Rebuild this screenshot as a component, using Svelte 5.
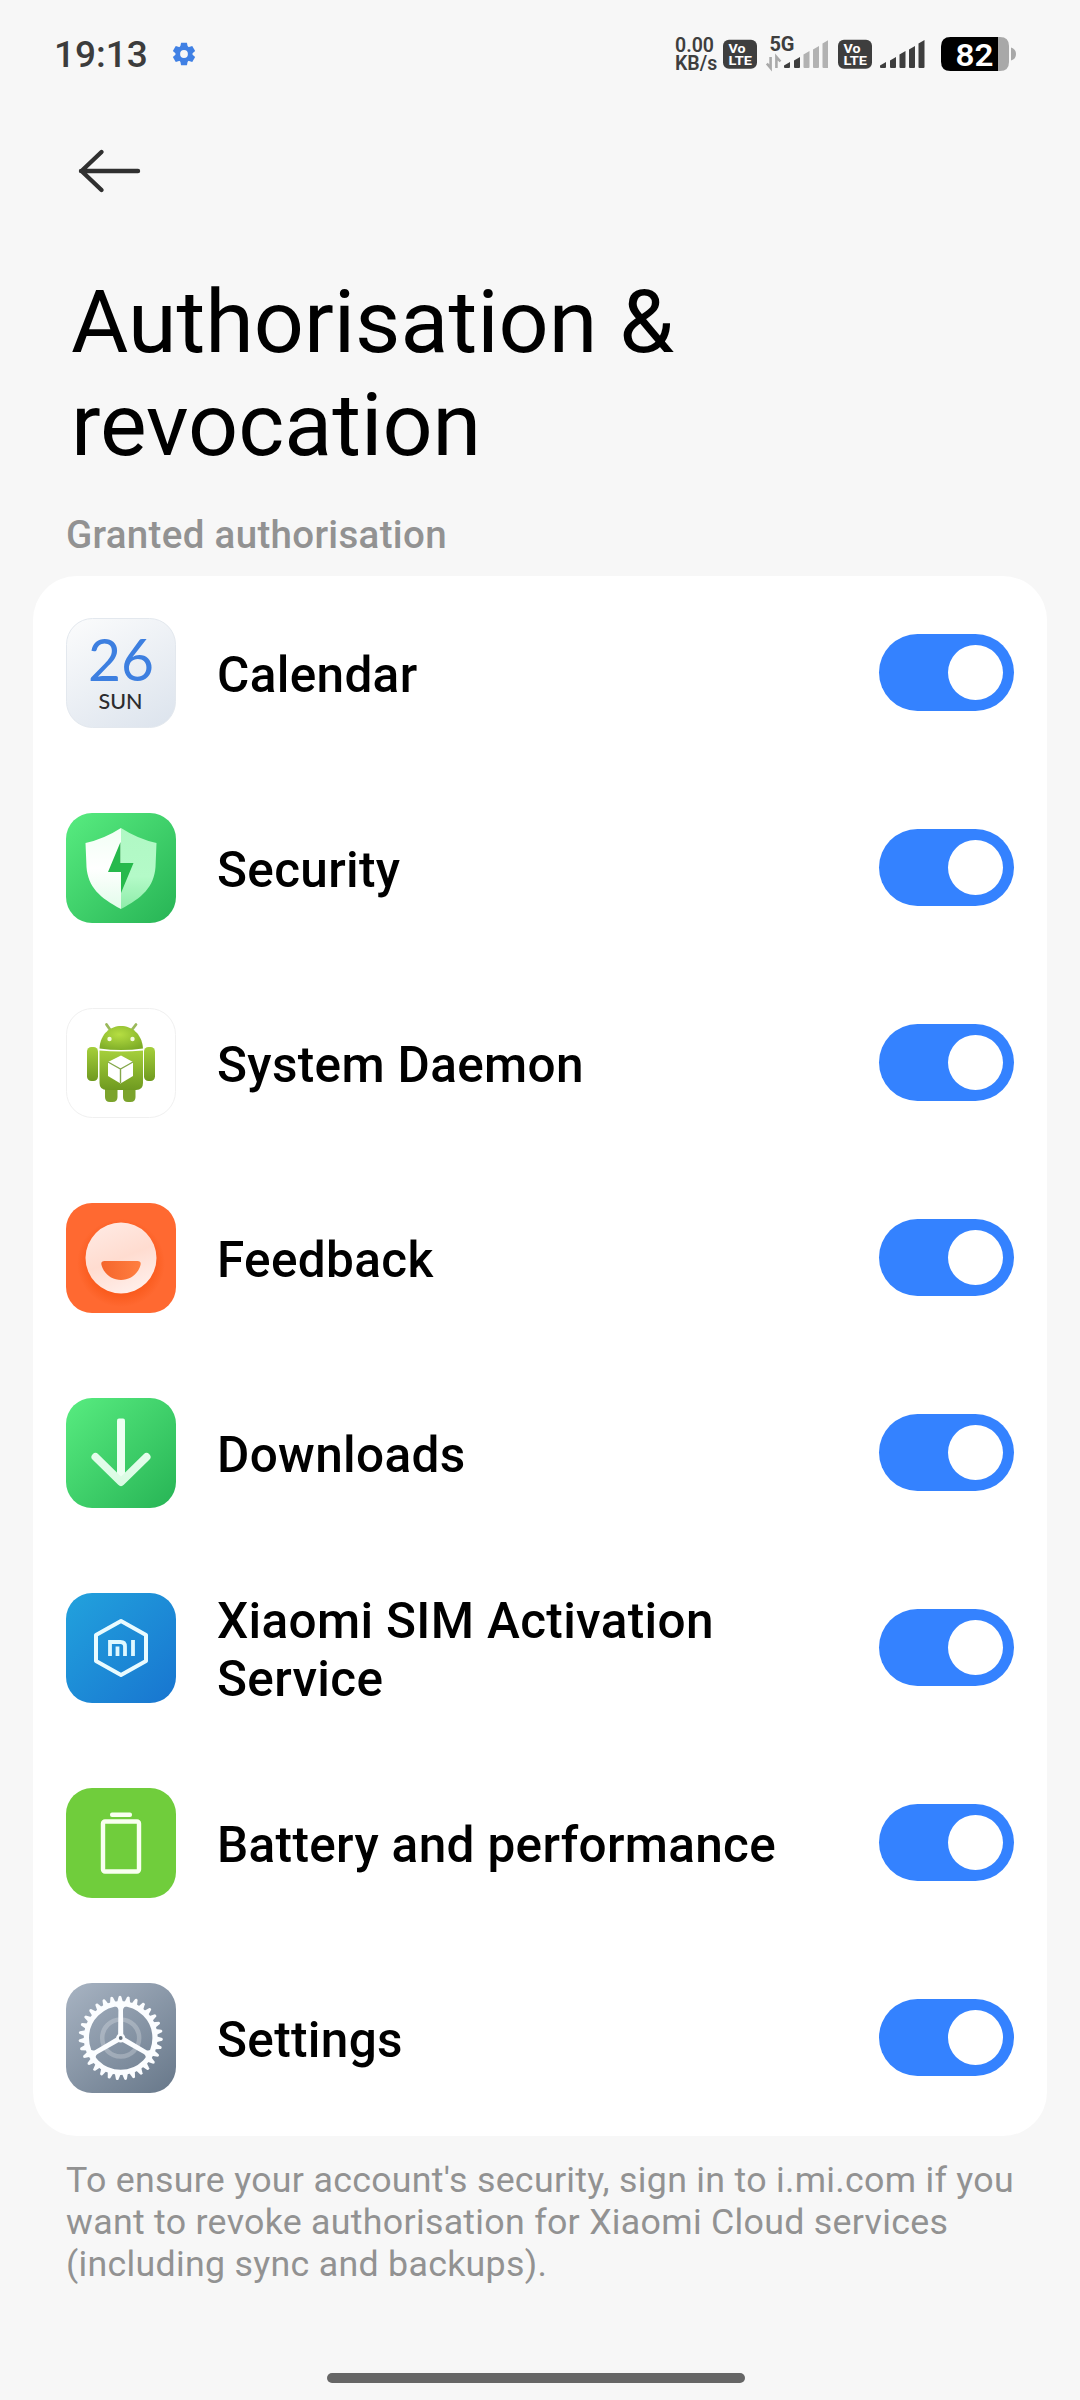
<script lang="ts">
	type App = { id: string; name: string; on: boolean };

	let apps: App[] = $state([
		{ id: 'calendar', name: 'Calendar', on: true },
		{ id: 'security', name: 'Security', on: true },
		{ id: 'daemon', name: 'System Daemon', on: true },
		{ id: 'feedback', name: 'Feedback', on: true },
		{ id: 'downloads', name: 'Downloads', on: true },
		{ id: 'sim', name: 'Xiaomi SIM Activation Service', on: true },
		{ id: 'battery', name: 'Battery and performance', on: true },
		{ id: 'settings', name: 'Settings', on: true }
	]);

	const TEETH = 31;
	const teeth = Array.from({ length: TEETH }, (_, i) => (i * 360) / TEETH - 1);
	const smallTeeth = [0, 60, 120, 180, 240, 300];

	// left edge, top edge of each signal bar
	const bars = [
		[0, 24],
		[10, 19],
		[19.5, 13],
		[29, 8],
		[38.5, 2]
	];
</script>

{#snippet volte()}
	<svg class="volte" width="34" height="30" viewBox="0 0 34 30">
		<rect y="0.8" width="34" height="29" rx="6" fill="#3e3e3e" />
		<text x="5.5" y="14" font-size="13" textLength="17" lengthAdjust="spacingAndGlyphs">Vo</text>
		<text x="5.5" y="26.2" font-size="13" textLength="23.5" lengthAdjust="spacingAndGlyphs">LTE</text>
	</svg>
{/snippet}

{#snippet signal(level: number)}
	{#each bars as [x, y], i}
		<path
			d="M{x} {y + 3.5} L{x + 6} {y} V29 Q{x + 6} 30 {x + 5} 30 H{x + 1} Q{x} 30 {x} 29 Z"
			fill={i < level ? '#3e3e3e' : '#b2b2b2'}
		/>
	{/each}
{/snippet}

<div class="screen">
	<header class="status">
		<span class="time">19:13</span>
		<svg class="notif" width="24" height="24" viewBox="-12 -12 24 24">
			{#each smallTeeth as a}
				<path d="M-3.8 -7 L-2.9 -11.2 H2.9 L3.8 -7 Z" fill="#4080e4" transform="rotate({a})" />
			{/each}
			<circle r="6.2" fill="none" stroke="#4080e4" stroke-width="4.6" />
		</svg>

		<div class="tray">
			<div class="speed">
				<span>0.00</span>
				<span>KB/s</span>
			</div>
			{@render volte()}
			<svg class="cell" width="62" height="44" viewBox="0 -4 62 44">
				<text x="3.5" y="15" font-size="20" font-weight="700" fill="#3e3e3e" textLength="25">5G</text>
				<path d="M4.6 21 V32 L0.8 27.5 M10.4 32 V21 L14.4 25.5" fill="none" stroke="#a9a9a9" stroke-width="2.6" />
				<g transform="translate(18 2)">{@render signal(2)}</g>
			</svg>
			{@render volte()}
			<svg class="cell2" width="45" height="36" viewBox="0 0 45 36">
				<g transform="translate(0 2)">{@render signal(5)}</g>
			</svg>
			<svg class="power" width="76" height="42" viewBox="0 -4 76 42">
				<path d="M57 0 H59 Q68 0 68 9 V25 Q68 34 59 34 H57 Z" fill="#a8a8a8" />
				<path d="M9.5 0 H57 V34 H9.5 Q0 34 0 24.5 V9.5 Q0 0 9.5 0 Z" fill="#000" />
				<path d="M70 10.5 Q75 12 75 17 Q75 22 70 23.5 Z" fill="#a8a8a8" />
				<text x="14.5" y="28.5" font-size="32" font-weight="600" fill="#fff" textLength="38" lengthAdjust="spacingAndGlyphs">82</text>
			</svg>
		</div>
	</header>

	<button class="back" aria-label="Back">
		<svg width="64" height="46" viewBox="0 0 64 46">
			<path
				d="M3 23 H60 M23.500 4 L3.500 23 L23.500 42"
				fill="none"
				stroke="#303030"
				stroke-width="4.4"
				stroke-linecap="round"
				stroke-linejoin="round"
			/>
		</svg>
	</button>

	<h1>Authorisation &amp; revocation</h1>
	<h2>Granted authorisation</h2>

	<ul class="card">
		{#each apps as app (app.id)}
			<li class="row">
				<svg class="icon" width="110" height="110" viewBox="0 0 110 110">
					{#if app.id === 'calendar'}
						<defs>
							<linearGradient id="cal" x1="0.2" y1="0" x2="0.8" y2="1">
								<stop offset="0" stop-color="#f9fafb" />
								<stop offset="1" stop-color="#dee5ee" />
							</linearGradient>
						</defs>
						<rect x="0.5" y="0.5" width="109" height="109" rx="26" fill="url(#cal)" stroke="#e3e8ee" />
						<text class="day" x="22" y="62.500" textLength="66" lengthAdjust="spacingAndGlyphs">26</text>
						<text class="weekday" x="32.500" y="91" textLength="44" lengthAdjust="spacingAndGlyphs">SUN</text>
					{:else if app.id === 'security'}
						<defs>
							<linearGradient id="sec" x1="0" y1="0" x2="1" y2="1">
								<stop offset="0" stop-color="#58ec80" />
								<stop offset="1" stop-color="#27b455" />
							</linearGradient>
							<linearGradient id="secR" x1="0" y1="0" x2="0" y2="1">
								<stop offset="0" stop-color="#b0f8c4" />
								<stop offset="0.6" stop-color="#b4fac8" />
								<stop offset="1" stop-color="#8eeca9" />
							</linearGradient>
							<linearGradient id="secL" x1="0" y1="0" x2="0" y2="1">
								<stop offset="0" stop-color="#f1fff5" />
								<stop offset="0.5" stop-color="#fff" />
								<stop offset="1" stop-color="#e2fcea" />
							</linearGradient>
						</defs>
						<rect width="110" height="110" rx="26" fill="url(#sec)" />
						<path d="M55 15 Q38 26 19.500 30 L20.500 54 C22 74 34 85 55 96 Z" fill="url(#secL)" />
						<path d="M55 15 Q72 26 90.500 30 L89.500 54 C88 74 76 85 55 96 Z" fill="url(#secR)" />
						<path d="M54.500 29 L42 59 H55 V80 L67.500 50 H54.500 Z" fill="#26b94c" />
					{:else if app.id === 'daemon'}
						<defs>
							<linearGradient id="bot" x1="0" y1="0" x2="0" y2="1">
								<stop offset="0" stop-color="#a5cf3b" />
								<stop offset="1" stop-color="#6f9a20" />
							</linearGradient>
							<radialGradient id="head" cx="0.45" cy="0.35" r="0.7">
								<stop offset="0" stop-color="#b6de42" />
								<stop offset="1" stop-color="#7dac27" />
							</radialGradient>
						</defs>
						<rect x="0.5" y="0.5" width="109" height="109" rx="26" fill="#fff" stroke="#f0f0f0" />
						<path d="M40.500 16.500 L45 23 M70 16.500 L65 23" stroke="#9bb95b" stroke-width="2.800" stroke-linecap="round" />
						<path d="M33.500 40.500 C35 10.500 75 10.500 77 40.500 Q55 43.500 33.500 40.500 Z" fill="url(#head)" />
						<circle cx="43.500" cy="31" r="2.200" fill="#f4fbdc" />
						<circle cx="66.500" cy="31" r="2.200" fill="#f4fbdc" />
						<path d="M39 76 H51.500 V89 Q51.500 94 46.500 94 H44 Q39 94 39 89 Z" fill="#7ba32c" />
						<path d="M57 76 H69.500 V89 Q69.500 94 64.500 94 H62 Q57 94 57 89 Z" fill="#7ba32c" />
						<rect x="21" y="39" width="11" height="34" rx="4.500" fill="url(#bot)" />
						<rect x="78" y="39" width="11" height="34" rx="4.500" fill="url(#bot)" />
						<path d="M33.500 42.500 Q55 44.500 77 42.500 V75 Q77 82 70 82 H41 Q33.500 82 33.500 75 Z" fill="url(#bot)" />
						<path d="M55 47.500 L67 54 V68 L54.500 75.500 L42 68 V54 Z" fill="#fff" />
						<path d="M42 54 L54.500 61 L67 54 M54.500 61 V75" fill="none" stroke="#84a74a" stroke-width="1.400" />
					{:else if app.id === 'feedback'}
						<defs>
							<linearGradient id="face" x1="0.3" y1="0" x2="0.7" y2="1">
								<stop offset="0" stop-color="#ffe9e2" />
								<stop offset="0.5" stop-color="#ffdcd0" />
								<stop offset="1" stop-color="#fff0ec" />
							</linearGradient>
							<linearGradient id="mouth" x1="0" y1="0" x2="1" y2="0">
								<stop offset="0" stop-color="#f5652c" />
								<stop offset="1" stop-color="#ff7f40" />
							</linearGradient>
							<radialGradient id="shade">
								<stop offset="0.7" stop-color="#f6500f" stop-opacity="0.6" />
								<stop offset="1" stop-color="#f6500f" stop-opacity="0" />
							</radialGradient>
						</defs>
						<rect width="110" height="110" rx="26" fill="#ff6931" />
						<circle cx="55" cy="60" r="44" fill="url(#shade)" />
						<circle cx="55" cy="55" r="35.500" fill="url(#face)" />
						<path d="M38.500 58 H71.500 Q75.500 58 74.500 62 C69 82 41 82 35.500 62 Q34.500 58 38.500 58 Z" fill="url(#mouth)" />
					{:else if app.id === 'downloads'}
						<defs>
							<linearGradient id="dl" x1="0" y1="0" x2="1" y2="1">
								<stop offset="0" stop-color="#58ec80" />
								<stop offset="1" stop-color="#27b455" />
							</linearGradient>
							<linearGradient id="dlArrow" gradientUnits="userSpaceOnUse" x1="0" y1="20" x2="0" y2="90">
								<stop offset="0" stop-color="#f2fff6" />
								<stop offset="1" stop-color="#d8fbe2" />
							</linearGradient>
						</defs>
						<rect width="110" height="110" rx="26" fill="url(#dl)" />
						<path d="M51 22.500 Q51 20.500 53 20.500 H57 Q59 20.500 59 22.500 V84 H51 Z" fill="#ecfff2" />
						<path
							d="M29.500 59 L55 84 L80.500 59"
							fill="none"
							stroke="url(#dlArrow)"
							stroke-width="8"
							stroke-linecap="round"
							stroke-linejoin="round"
						/>
					{:else if app.id === 'sim'}
						<defs>
							<linearGradient id="sim" x1="0" y1="0" x2="1" y2="1">
								<stop offset="0" stop-color="#22a2dd" />
								<stop offset="1" stop-color="#1875d0" />
							</linearGradient>
						</defs>
						<rect width="110" height="110" rx="26" fill="url(#sim)" />
						<path
							d="M55 28 L80 42 V68 L55 82 L30 68 V42 Z"
							fill="none"
							stroke="#e9fbff"
							stroke-width="4"
							stroke-linejoin="round"
						/>
						<path d="M44 63 V49 H54.500 Q59 49 59 53.500 V63 M51.500 53.500 V63 M67 47 V63" fill="none" stroke="#dff8ff" stroke-width="3.800" />
					{:else if app.id === 'battery'}
						<rect width="110" height="110" rx="26" fill="#70cd3c" />
						<rect x="44" y="24.500" width="22" height="4.500" rx="2" fill="#f8fff0" />
						<rect x="37" y="33.500" width="36" height="50" rx="2" fill="none" stroke="#f8fff0" stroke-width="4.400" />
					{:else}
						<defs>
							<linearGradient id="set" x1="0.1" y1="0" x2="0.9" y2="1">
								<stop offset="0" stop-color="#a5b1c0" />
								<stop offset="1" stop-color="#6a7a8c" />
							</linearGradient>
						</defs>
						<rect width="110" height="110" rx="26" fill="url(#set)" />
						<g transform="translate(54.700 55)">
							<circle r="18.500" fill="none" stroke="#fff" stroke-opacity="0.24" stroke-width="4.500" />
							{#each teeth as a}
								<path d="M-3 -35.500 L-1.300 -41.500 Q0 -43 1.300 -41.500 L3 -35.500 Z" fill="#fbfdff" transform="rotate({a})" />
							{/each}
							<circle r="34.300" fill="none" stroke="#fbfdff" stroke-width="5.200" />
							{#each [0, 120, 240] as a}
								<path
									d="M-2.600 0 L-2.300 -28 Q-2.500 -31.500 -7 -32.500 H7 Q2.500 -31.500 2.300 -28 L2.600 0 Z"
									fill="#fbfdff"
									transform="rotate({a})"
								/>
							{/each}
							<circle r="4.500" fill="#fbfdff" />
							<circle r="1.900" fill="#66727f" />
						</g>
					{/if}
				</svg>
				<span class="name">{app.name}</span>
				<button
					class="switch"
					class:on={app.on}
					role="switch"
					aria-checked={app.on}
					aria-label={app.name}
					onclick={() => (app.on = !app.on)}
				>
					<span class="knob"></span>
				</button>
			</li>
		{/each}
	</ul>

	<p class="note">
		To ensure your account's security, sign in to i.mi.com if you want to revoke authorisation for Xiaomi
		Cloud services (including sync and backups).
	</p>

	<div class="home"></div>
</div>

<style>
	:global(body) {
		background: #f7f7f7;
	}

	.screen {
		box-sizing: border-box;
		width: 1080px;
		height: 2400px;
		display: flex;
		flex-direction: column;
		background: #f7f7f7;
		font-family: Roboto, sans-serif;
		color: #000;
	}

	button {
		border: none;
		padding: 0;
		cursor: pointer;
	}

	/* Status bar */
	.status {
		height: 108px;
		box-sizing: border-box;
		padding: 0 63px 0 54px;
		display: flex;
		align-items: center;
		flex-shrink: 0;
	}

	.time {
		width: 118px;
		padding-top: 2px;
		font-size: 37px;
		font-weight: 500;
		line-height: 44px;
		letter-spacing: 0;
		color: #3c3c3c;
	}

	.tray {
		display: flex;
		align-items: center;
		margin-left: auto;
	}

	.tray svg {
		display: block;
		font-family: Roboto, sans-serif;
	}

	.speed {
		width: 48px;
		display: flex;
		flex-direction: column;
		padding-top: 2px;
		font-size: 19.500px;
		font-weight: 600;
		line-height: 18.500px;
		color: #3e3e3e;
	}

	.volte {
		font-weight: 700;
		fill: #fff;
	}

	.cell { margin: 0 10px 0 9px; }
	.cell2 { margin: 0 16px 0 8px; }

	/* Heading */
	.back {
		align-self: flex-start;
		height: 126px;
		margin-left: 78px;
		display: flex;
		align-items: center;
		background: none;
		flex-shrink: 0;
	}

	h1 {
		width: 800px;
		margin: 36px 0 0 71px;
		font-size: 88px;
		font-weight: 400;
		line-height: 103px;
	}

	h2 {
		margin: 36px 0 0 66px;
		font-size: 38.500px;
		font-weight: 500;
		line-height: 45px;
		letter-spacing: 0.32px;
		color: #929292;
	}

	/* App list */
	.card {
		margin: 19px 33px 0;
		padding: 0;
		border-radius: 44px;
		background: #fff;
		list-style: none;
	}

	.row {
		height: 195px;
		box-sizing: border-box;
		padding: 0 33px 1px;
		display: flex;
		align-items: center;
	}

	.icon {
		flex-shrink: 0;
		margin-right: 41px;
	}

	.day {
		font-family: Lato, sans-serif;
		font-size: 59px;
		fill: #3d7fe0;
	}

	.weekday {
		font-family: Lato, sans-serif;
		font-size: 21.500px;
		font-weight: 500;
		fill: #2c2c2e;
	}

	.name {
		flex: 1;
		padding: 4px 50px 0 0;
		font-size: 49.500px;
		font-weight: 500;
		line-height: 58px;
		letter-spacing: 0.34px;
	}

	.switch {
		width: 135px;
		height: 77px;
		box-sizing: border-box;
		padding: 0 11px;
		margin-bottom: 1px;
		display: flex;
		align-items: center;
		flex-shrink: 0;
		border-radius: 39px;
		background: #e3e3e3;
	}

	.switch.on {
		justify-content: flex-end;
		background: #3482ff;
	}

	.knob {
		width: 55px;
		height: 55px;
		border-radius: 50%;
		background: #fff;
	}

	.note {
		margin: 23px 60px 0 66px;
		font-size: 35.750px;
		line-height: 42px;
		letter-spacing: 0.29px;
		color: #929292;
	}

	.home {
		width: 418px;
		height: 10px;
		margin: auto auto 17px 327px;
		border-radius: 5px;
		background: #666;
	}
</style>
